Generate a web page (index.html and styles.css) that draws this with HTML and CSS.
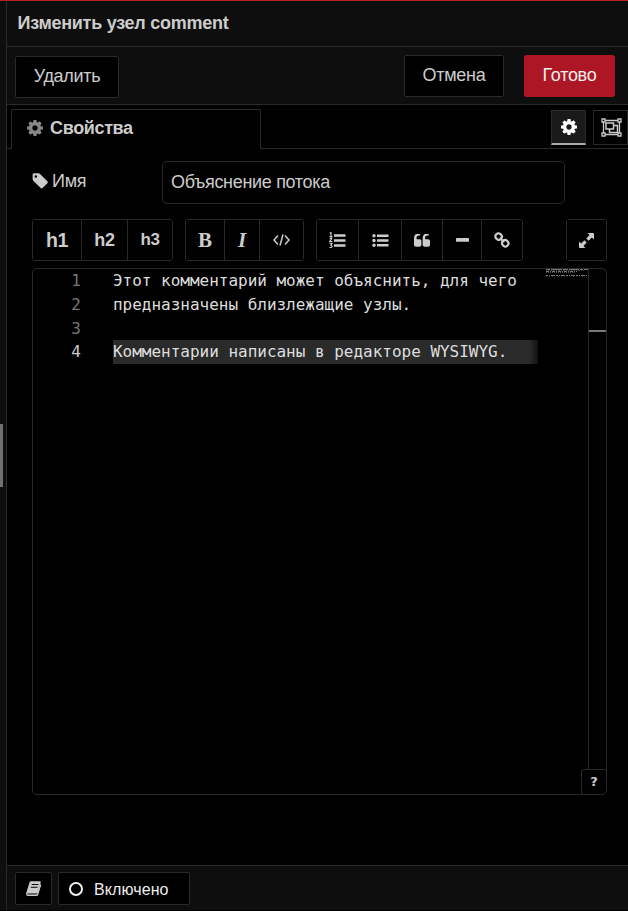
FILE: index.html
```html
<!DOCTYPE html>
<html lang="ru">
<head>
<meta charset="utf-8">
<title>Изменить узел comment</title>
<link rel="stylesheet" href="styles.css">
</head>
<body>
<svg class="defs" width="0" height="0">
  <symbol id="cog" viewBox="128 128 1536 1536"><path d="M1152 896q0-106-75-181t-181-75-181 75-75 181 75 181 181 75 181-75 75-181zm512-109v222q0 12-8 23t-20 13l-185 28q-19 54-39 91 35 50 107 138 10 12 10 25t-9 23q-27 37-99 108t-94 71q-12 0-26-9l-138-108q-44 23-91 38-16 136-29 186-7 28-36 28h-222q-14 0-24.500-8.500t-11.500-21.500l-28-184q-49-16-90-37l-141 107q-10 9-25 9-14 0-25-11-126-114-165-168-7-10-7-23 0-12 8-23 15-21 51-66.500t54-70.500q-27-50-41-99l-183-27q-13-2-21-12.500t-8-23.500v-222q0-12 8-23t19-13l186-28q14-46 39-92-40-57-107-138-10-12-10-24 0-10 9-23 26-36 98.500-107.500t94.500-71.500q13 0 26 10l138 107q44-23 91-38 16-136 29-186 7-28 36-28h222q14 0 24.500 8.500t11.500 21.500l28 184q49 16 90 37l142-107q9-9 24-9 13 0 25 10 129 119 165 170 7 8 7 22 0 12-8 23-15 21-51 66.500t-54 70.500q26 50 41 98l183 28q13 2 21 12.500t8 23.500z"/></symbol>
</svg>
<div class="app">
  <div class="splitter"><div class="grip"></div></div>
  <main class="tray">
    <header class="title">Изменить узел comment</header>
    <div class="actions">
      <button class="btn delete"><span>Удалить</span></button>
      <button class="btn cancel"><span>Отмена</span></button>
      <button class="btn done"><span>Готово</span></button>
    </div>
    <nav class="tabs">
      <div class="tab"><svg width="16" height="16"><use href="#cog"/></svg><span>Свойства</span></div>
      <div class="tab-fill">
        <button class="tool active"><svg width="16" height="16"><use href="#cog"/></svg></button>
        <button class="tool"><svg width="21" height="19" viewBox="0 0 21 19"><g fill="none" stroke="currentColor"><path d="M4 2.500h13M4 16.500h13M2.500 4v11M18.500 4v11" stroke-width="1.300"/><path d="M1 1h3v3H1zM17 1h3v3h-3zM1 15h3v3H1zM17 15h3v3h-3z" stroke-width="1.300"/><path d="M5 5h7.500v6H5zM12.500 7.500h4v7H8.500v-3.500" stroke-width="1.500"/></g></svg></button>
      </div>
    </nav>
    <section class="body">
      <div class="name-row">
        <label class="label"><svg width="16" height="16" viewBox="64 128 1600 1536"><path d="M576 448q0-53-37.500-90.500t-90.500-37.500-90.500 37.500-37.500 90.500 37.500 90.500 90.500 37.500 90.500-37.500 37.500-90.500zm1067 576q0 53-37 90l-491 492q-39 37-91 37-53 0-90-37l-715-716q-38-37-64.500-101t-26.500-117v-416q0-52 38-90t90-38h416q53 0 117 26.500t102 64.500l715 714q37 39 37 91z"/></svg><span>Имя</span></label>
        <div class="input"><span>Объяснение потока</span></div>
      </div>
      <div class="toolbar">
        <div class="group g1"><button class="h1">h1</button><button class="h2">h2</button><button class="h3">h3</button></div>
        <div class="group g2">
          <button class="bold">B</button><button class="italic">I</button>
          <button><svg width="17" height="12" viewBox="0 0 17 12" fill="none" stroke="currentColor" stroke-width="1.500"><path d="M5 1.500L1 6l4 4.500M12 1.500L16 6l-4 4.500M10 .5L7 11.500"/></svg></button>
        </div>
        <div class="group g3">
          <button><svg width="17" height="17" viewBox="0 0 17 17"><path d="M5 2.300h11.500v2.400H5zM5 7.300h11.500v2.400H5zM5 12.300h11.500v2.400H5z"/><path d="M.7 1.300L2 .6v4M.5 4.600h3M.7 6.700q2-1.200 2 .2L.7 9.600h2.600M.7 11.500h2.300l-1.200 1.800q1.500.2 1.200 1.500-.6 1.300-2.500.4" fill="none" stroke="currentColor" stroke-width="1.100"/></svg></button>
          <button><svg width="17" height="13" viewBox="0 0 17 13"><circle cx="2" cy="1.800" r="1.700"/><circle cx="2" cy="6.500" r="1.700"/><circle cx="2" cy="11.200" r="1.700"/><path d="M5 .6h11.500V3H5zM5 5.300h11.500v2.400H5zM5 10h11.500v2.400H5z"/></svg></button>
          <button><svg width="16" height="13" viewBox="64 256 1664 1280"><path id="q" d="M832 960v384q0 80-56 136t-136 56h-384q-80 0-136-56t-56-136v-704q0-104 40.500-198.500t109.500-163.500 163.500-109.500 198.500-40.500h64q26 0 45 19t19 45v128q0 26-19 45t-45 19h-64q-106 0-181 75t-75 181v32q0 40 28 68t68 28h224q80 0 136 56t56 136z"/><use href="#q" x="896"/></svg></button>
          <button><svg width="13" height="4" viewBox="0 0 13 4"><rect width="13" height="3.800" rx=".9"/></svg></button>
          <button><svg width="16" height="16" viewBox="0 0 16 16"><g fill="none" stroke="currentColor" stroke-width="2.200"><rect x="1.400" y="1.600" width="6.400" height="6" rx="2.700" transform="rotate(45 4.600 4.600)"/><rect x="8" y="8.200" width="6.400" height="6" rx="2.700" transform="rotate(45 11.200 11.200)"/><path d="M6 6l4 4"/></g></svg></button>
        </div>
        <div class="group g4"><button><svg width="15" height="15" viewBox="0 0 15 15"><path d="M8.500 0h5.700q.8 0 .8.800v5.700l-2.100-2.100-3.300 3.300-2.300-2.300 3.300-3.300zM6.500 15H.8Q0 15 0 14.200V8.500l2.100 2.100 3.300-3.300 2.300 2.300-3.300 3.300z"/></svg></button></div>
      </div>
      <div class="editor">
        <div class="numbers"><span>1</span><span>2</span><span>3</span><span class="current">4</span></div>
        <div class="code"><div>Этот комментарий может объяснить, для чего</div><div>предназначены близлежащие узлы.</div><div></div><div class="selected">Комментарии написаны в редакторе WYSIWYG.</div></div>
        <svg class="minimap" width="42" height="9" viewBox="0 0 42 9" fill="none" stroke="currentColor"><path d="M0 .5h42" stroke-dasharray="4 1 11 1 5 1 10 1 3 1"/><path d="M0 1.500h38" stroke-dasharray="1 1 2 1" opacity=".5"/><path d="M0 2.500h31" stroke-dasharray="3 1 1 1"/><path d="M0 3.500h29" stroke-dasharray="1 1" opacity=".7"/><path d="M0 6.500h41" stroke-dasharray="2 1 1 1 4 1"/><path d="M0 7.500h41" stroke-dasharray="1 2" opacity=".4"/></svg>
        <div class="ruler"><div class="mark"></div></div>
        <div class="help">?</div>
      </div>
    </section>
    <footer class="footer">
      <button class="fbtn book"><svg width="16" height="15" viewBox="0 0 16 15"><path fill-rule="evenodd" d="M5.200.2h8.600q1.300 0 .9 1.400l-3 9.700q-.4 1.300-1.700 1.300H2q-.8 0-.8.500 0 .5 1 .5h8q.7 0 1-.8l3.200-9.900q1.100.5.700 1.700l-2.900 9.100q-.4 1.300-1.800 1.300H2Q.1 15 0 13q0-.8.4-1.600L3.500 1.500Q3.900.2 5.200.2zM5.900 3l-.4 1.100h6.800l.4-1.100zM5 5.700l-.4 1.100h6.800l.4-1.100z"/></svg></button>
      <button class="fbtn enabled"><i class="ring"></i><span>Включено</span></button>
    </footer>
  </main>
</div>
</body>
</html>
```
FILE: styles.css
```css
* { box-sizing: border-box; }
body { margin: 0; background: #000; color: #ccc; font-family: "Liberation Sans", Arial, sans-serif; font-size: 18px; overflow: hidden; }
button { font: inherit; color: inherit; background: #000; border: 1px solid #2a2a2a; padding: 0; margin: 0; display: flex; align-items: center; justify-content: center; white-space: nowrap; }
svg { display: block; fill: currentColor; flex: none; }
.defs { position: absolute; }
.minimap, .group svg[fill="none"] { fill: none; }
.app { display: flex; height: 911px; border-top: 1px solid #b92020; border-bottom: 1px solid #000; }
.splitter { width: 7px; background: #0e0e0e; border-right: 1px solid #2a2a2a; padding-top: 423px; }
.grip { width: 3px; height: 63px; background: #707070; }
.tray { flex: 1; min-width: 0; display: flex; flex-direction: column; }
.title { height: 46px; background: #0e0e0e; border-bottom: 1px solid #2a2a2a; padding-left: 10.500px; line-height: 44px; font-weight: bold; letter-spacing: -.27px; white-space: nowrap; }
.actions { height: 58px; background: #0e0e0e; border-bottom: 1px solid #2a2a2a; padding: 8px 13px 0 8px; display: flex; }
.btn { height: 42px; border-radius: 2px; padding-bottom: 2px; letter-spacing: -.3px; }
.delete { width: 104px; margin-top: 1px; }
.cancel { width: 100px; margin-left: auto; }
.done { width: 91px; margin-left: 20px; background: #ad1625; border-color: #ad1625; color: #eee; }
.tabs { height: 44px; display: flex; padding-top: 4px; background: linear-gradient(#2a2a2a, #2a2a2a) 0 43px / 4px 1px no-repeat; }
.tab { margin-left: 4px; width: 250px; height: 40px; border: 1px solid #2a2a2a; border-bottom: 0; padding: 0 0 3px 15px; display: flex; align-items: center; gap: 7px; font-weight: bold; letter-spacing: -.35px; }
.tab svg { color: #888; }
.tab-fill { flex: 1; border-bottom: 1px solid #2a2a2a; display: flex; justify-content: flex-end; gap: 7px; padding-top: 1px; }
.tool { width: 35px; height: 35px; }
.tool svg { margin-left: 1px; margin-bottom: 1px; }
.tool.active { background: #1a1a1a; color: #fff; border-bottom: 2px solid #aaa; }
.tool.active svg { margin: 0; }
.body { height: 716px; padding: 12px 21px 0 25px; }
.name-row { display: flex; height: 43px; }
.label { width: 130px; display: flex; gap: 4px; align-items: center; padding-bottom: 4px; letter-spacing: -.3px; }
.label span { padding-top: 2px; }
.input { width: 403px; border: 1px solid #2a2a2a; border-radius: 5px; padding-left: 8px; line-height: 40px; letter-spacing: -.32px; }
.toolbar { margin-top: 15px; display: flex; gap: 12px; }
.group { height: 42px; display: grid; border: 1px solid #2a2a2a; border-radius: 3px; overflow: hidden; }
.group button { border: 0; border-right: 1px solid #2a2a2a; font-weight: bold; }
.group button:last-child { border-right: 0; }
.g1 { grid-template-columns: 49px 46px 44px; }
.g2 { grid-template-columns: 39px 35px 43px; }
.g3 { grid-template-columns: 42px 43px 41px 39px 40px; }
.g4 { width: 41px; margin-left: auto; }
.group .h1 { font-size: 19.500px; letter-spacing: -.3px; }
.group .h2 { font-size: 18px; letter-spacing: -.3px; }
.group .h3 { font-size: 17px; letter-spacing: -.3px; }
.bold, .italic { font-family: "Liberation Serif", serif; font-size: 21px; }
.italic { font-style: italic; }
.editor { position: relative; width: 575px; height: 527px; margin-top: 7px; border: 1px solid #2a2a2a; border-radius: 5px; display: flex; overflow: hidden; font: 16px/26px "DejaVu Sans Mono", monospace; }
.numbers { width: 80px; padding-right: 32px; margin-top: -1px; display: flex; flex-direction: column; text-align: right; color: #777; }
.numbers span { height: 24px; }
.numbers .current { color: #ccc; line-height: 24px; }
.code { width: 425px; margin-top: -1px; color: #ddd; white-space: pre; letter-spacing: -.015px; }
.code div { height: 24px; }
.code .selected { background: linear-gradient(90deg, #2a2a2a 98%, #111); line-height: 24px; }
.minimap { margin-left: 8px; color: #777; }
.ruler { margin-left: auto; width: 18px; border-left: 1px solid #2a2a2a; padding-top: 61px; }
.mark { height: 2px; background: #777; }
.help { position: absolute; right: -1px; bottom: -1px; width: 26px; height: 26px; border: 1px solid #2a2a2a; border-radius: 3px 3px 5px 3px; background: #000; text-align: center; font: bold 13px/24px "DejaVu Sans", sans-serif; }
.footer { height: 45px; background: #0e0e0e; border-top: 1px solid #2a2a2a; padding: 6px 8px; display: flex; gap: 6px; }
.fbtn { height: 33px; border-radius: 2px; }
.book { width: 37px; }
.enabled { width: 132px; justify-content: flex-start; padding-left: 10px; gap: 11px; color: #eee; font-size: 16px; letter-spacing: .1px; }
.enabled span { padding-top: 2px; }
.ring { width: 14px; height: 14px; border: 2px solid #eee; border-radius: 50%; }
```
